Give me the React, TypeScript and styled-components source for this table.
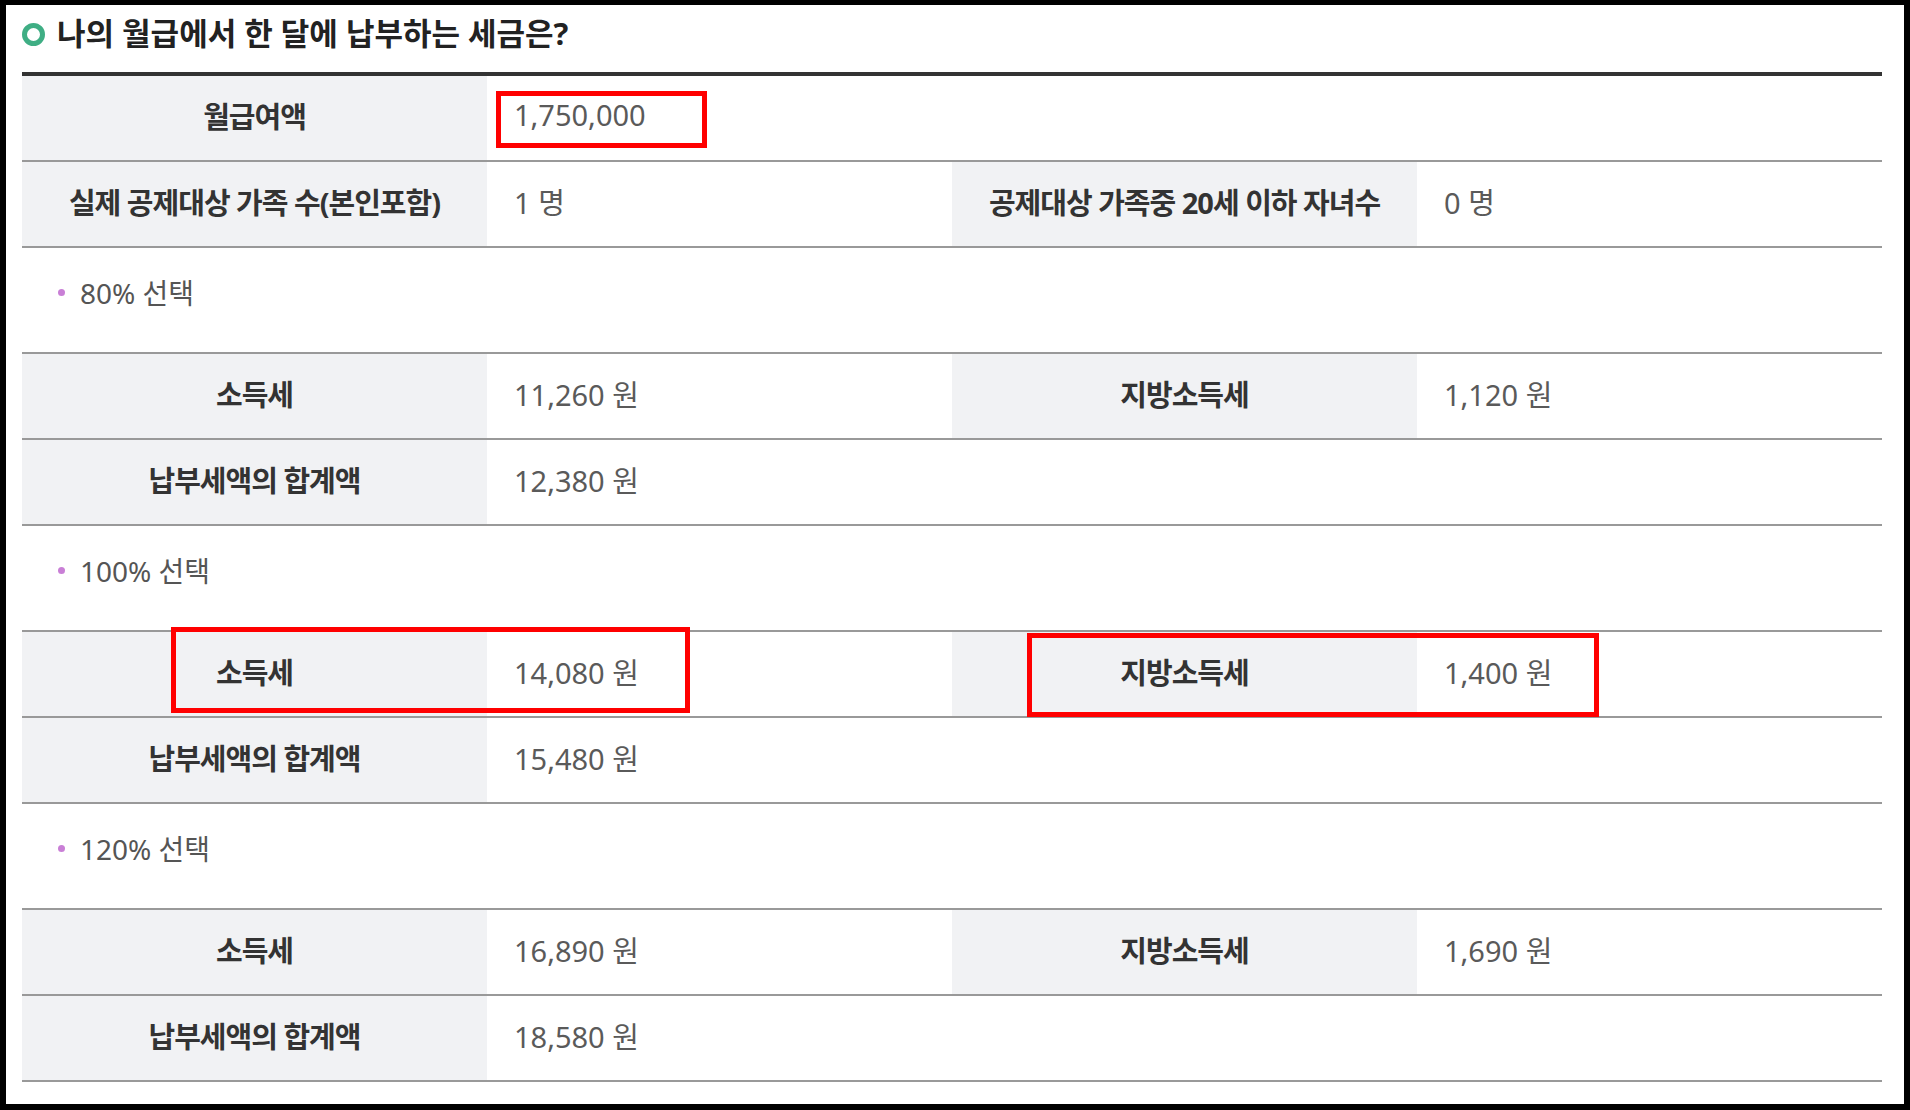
import React from "react";
import styled, { createGlobalStyle } from "styled-components";

const GlobalStyle = createGlobalStyle`
  html, body {
    margin: 0;
    padding: 0;
    background: #000;
  }
  body {
    height: 1110px;
    overflow: hidden;
    font-family: "Noto Sans", "Noto Sans CJK KR", sans-serif;
  }
`;

const Page = styled.div`
  position: relative;
  box-sizing: border-box;
  margin: 5px 6px 0 6px;
  height: 1099px;
  padding: 4px 22px 0 16px;
  background: #fff;
`;

const Heading = styled.h2`
  display: flex;
  align-items: center;
  gap: 12px;
  height: 44px;
  margin: 0 0 19px 0;
  font-size: 31px;
  font-weight: 700;
  letter-spacing: 0;
  color: #222;
`;

const Ring = styled.span`
  width: 23px;
  height: 23px;
  box-sizing: border-box;
  border: 5.5px solid #3fae84;
  border-radius: 50%;
  margin-top: 6px;
`;

const Table = styled.div<{ $first?: boolean }>`
  border-top: ${(p) => (p.$first ? "4px solid #333" : "2px solid #999")};
`;

const Row = styled.div`
  display: grid;
  grid-template-columns: repeat(4, 1fr);
  height: 84px;
  border-bottom: 2px solid #999;
`;

const Label = styled.div`
  display: flex;
  align-items: center;
  justify-content: center;
  box-sizing: border-box;
  padding-bottom: 7px;
  background: #f1f2f4;
  font-size: 29px;
  font-weight: 700;
  letter-spacing: -1px;
  color: #333;
`;

const Value = styled.div<{ $span?: number }>`
  display: flex;
  align-items: center;
  box-sizing: border-box;
  padding: 0 0 7px 27px;
  grid-column: span ${(p) => p.$span ?? 1};
  font-size: 29px;
  color: #5a5a5a;
`;

const Section = styled.div`
  display: flex;
  align-items: center;
  gap: 15px;
  box-sizing: border-box;
  height: 104px;
  padding: 0 0 16px 36px;
  font-size: 28px;
  color: #555;
`;

const Dot = styled.span`
  width: 7px;
  height: 7px;
  border-radius: 50%;
  background: #c97fd6;
`;

const Mark = styled.div`
  position: absolute;
  box-sizing: border-box;
  border: 5px solid #ff0000;
  pointer-events: none;
`;

type Group = {
  title: string;
  income: string;
  local: string;
  total: string;
};

const groups: Group[] = [
  { title: "80% 선택", income: "11,260 원", local: "1,120 원", total: "12,380 원" },
  { title: "100% 선택", income: "14,080 원", local: "1,400 원", total: "15,480 원" },
  { title: "120% 선택", income: "16,890 원", local: "1,690 원", total: "18,580 원" },
];

// annotation boxes drawn over the table (page coordinates minus the black frame)
const marks = [
  { left: 490, top: 86, width: 211, height: 57 },
  { left: 165, top: 622, width: 519, height: 86 },
  { left: 1021, top: 628, width: 572, height: 84 },
];

export default function App() {
  return (
    <>
      <GlobalStyle />
      <Page>
        <Heading>
          <Ring />
          나의 월급에서 한 달에 납부하는 세금은?
        </Heading>

        <Table $first>
          <Row>
            <Label>월급여액</Label>
            <Value $span={3}>1,750,000</Value>
          </Row>
          <Row>
            <Label>실제 공제대상 가족 수(본인포함)</Label>
            <Value>1 명</Value>
            <Label>공제대상 가족중 20세 이하 자녀수</Label>
            <Value>0 명</Value>
          </Row>
        </Table>

        {groups.map((g) => (
          <React.Fragment key={g.title}>
            <Section>
              <Dot />
              {g.title}
            </Section>
            <Table>
              <Row>
                <Label>소득세</Label>
                <Value>{g.income}</Value>
                <Label>지방소득세</Label>
                <Value>{g.local}</Value>
              </Row>
              <Row>
                <Label>납부세액의 합계액</Label>
                <Value $span={3}>{g.total}</Value>
              </Row>
            </Table>
          </React.Fragment>
        ))}

        {marks.map((m, i) => (
          <Mark key={i} style={{ left: m.left, top: m.top, width: m.width, height: m.height }} />
        ))}
      </Page>
    </>
  );
}
